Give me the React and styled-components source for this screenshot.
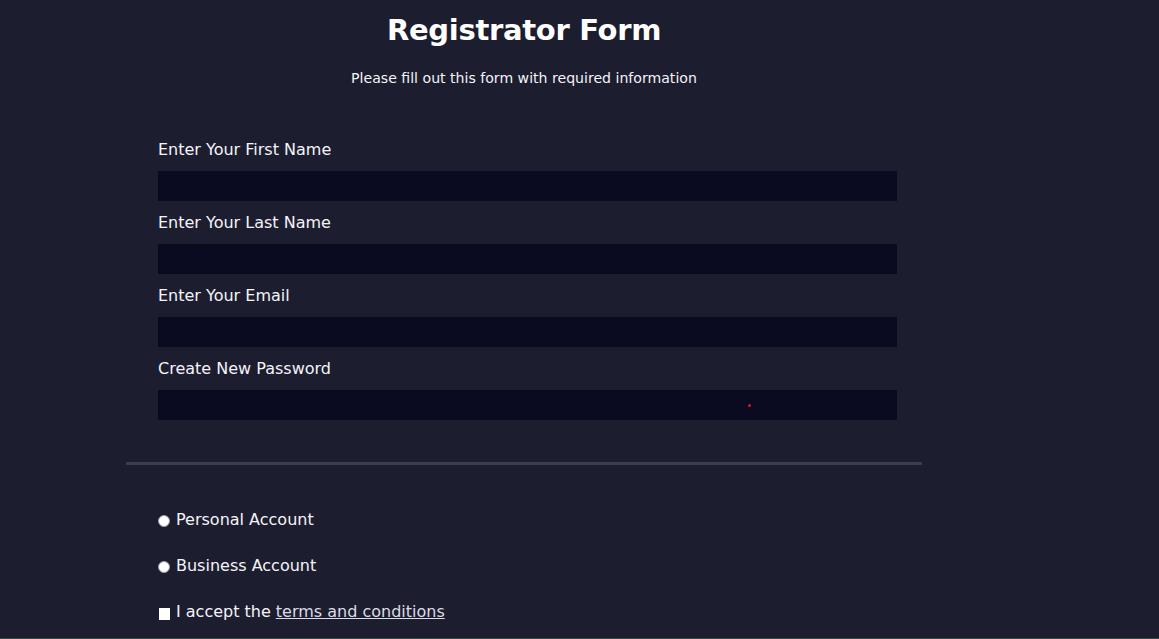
import React from "react";
import styled, { createGlobalStyle } from "styled-components";

const Global = createGlobalStyle`
  html, body { margin: 0; padding: 0; background: #1d1d30; }
  body { font-family: "DejaVu Sans", Verdana, sans-serif; color: #f4f4f8; overflow: hidden; }
`;

const Page = styled.div`
  height: 639px;
  display: flex;
  flex-direction: column;
  background: #1d1d30;
`;

const Form = styled.form`
  width: 796px;
  margin-left: 126px;
  display: flex;
  flex-direction: column;
`;

const Title = styled.h1`
  margin: 11px 0 0;
  text-align: center;
  font-size: 29px;
  line-height: 38px;
  font-weight: bold;
  letter-spacing: -0.3px;
  color: #ffffff;
`;

const Subtitle = styled.p`
  margin: 19px 0 0;
  text-align: center;
  font-size: 14.1px;
  line-height: 20px;
`;

const Fields = styled.div`
  padding: 40px 25px 0 32px;
  display: flex;
  flex-direction: column;
`;

const Label = styled.label`
  display: block;
  margin: 12px 0 11px;
  font-size: 16px;
  line-height: 20px;
`;

const InputWrap = styled.div`
  position: relative;
`;

const Input = styled.input`
  display: block;
  box-sizing: border-box;
  width: 739px;
  height: 30px;
  border: none;
  outline: none;
  background: #0a0b20;
  color: #fff;
  padding: 0 8px;
`;

const Dot = styled.span`
  position: absolute;
  left: 590px;
  top: 14px;
  width: 3px;
  height: 3px;
  border-radius: 50%;
  background: #e01818;
`;

const Divider = styled.hr`
  margin: 42px 0 0;
  border: none;
  height: 3px;
  background: #3d3d52;
`;

const Options = styled.div`
  padding: 45px 0 0 32px;
  display: flex;
  flex-direction: column;
  gap: 26px;
`;

const Option = styled.label`
  display: flex;
  align-items: center;
  font-size: 16px;
  line-height: 20px;
`;

const Radio = styled.input.attrs({ type: "radio" })`
  appearance: none;
  margin: 2px 6px 0 0;
  width: 12px;
  height: 12px;
  border-radius: 50%;
  background: #ffffff;
  border: 1px solid #9a9aa4;
  box-sizing: border-box;
`;

const Check = styled.input.attrs({ type: "checkbox" })`
  appearance: none;
  margin: 3px 6px 0 1px;
  width: 11px;
  height: 12px;
  background: #ffffff;
  border: none;
`;

const Link = styled.a`
  color: #dcdce4;
  text-decoration: underline;
  margin-left: 5px;
`;

const BottomEdge = styled.div`
  margin-top: auto;
  height: 1px;
  background: #3a4949;
`;

const fields = [
  { label: "Enter Your First Name", type: "text" },
  { label: "Enter Your Last Name", type: "text" },
  { label: "Enter Your Email", type: "email" },
  { label: "Create New Password", type: "password", dot: true },
];

export default function App() {
  return (
    <Page>
      <Global />
      <Form onSubmit={(e) => e.preventDefault()}>
        <Title>Registrator Form</Title>
        <Subtitle>Please fill out this form with required information</Subtitle>
        <Fields>
          {fields.map((f) => (
            <div key={f.label}>
              <Label>{f.label}</Label>
              <InputWrap>
                <Input type={f.type} />
                {f.dot && <Dot />}
              </InputWrap>
            </div>
          ))}
        </Fields>
        <Divider />
        <Options>
          <Option>
            <Radio name="acct" />
            Personal Account
          </Option>
          <Option>
            <Radio name="acct" />
            Business Account
          </Option>
          <Option>
            <Check />
            I accept the<Link href="#">terms and conditions</Link>
          </Option>
        </Options>
      </Form>
      <BottomEdge />
    </Page>
  );
}
